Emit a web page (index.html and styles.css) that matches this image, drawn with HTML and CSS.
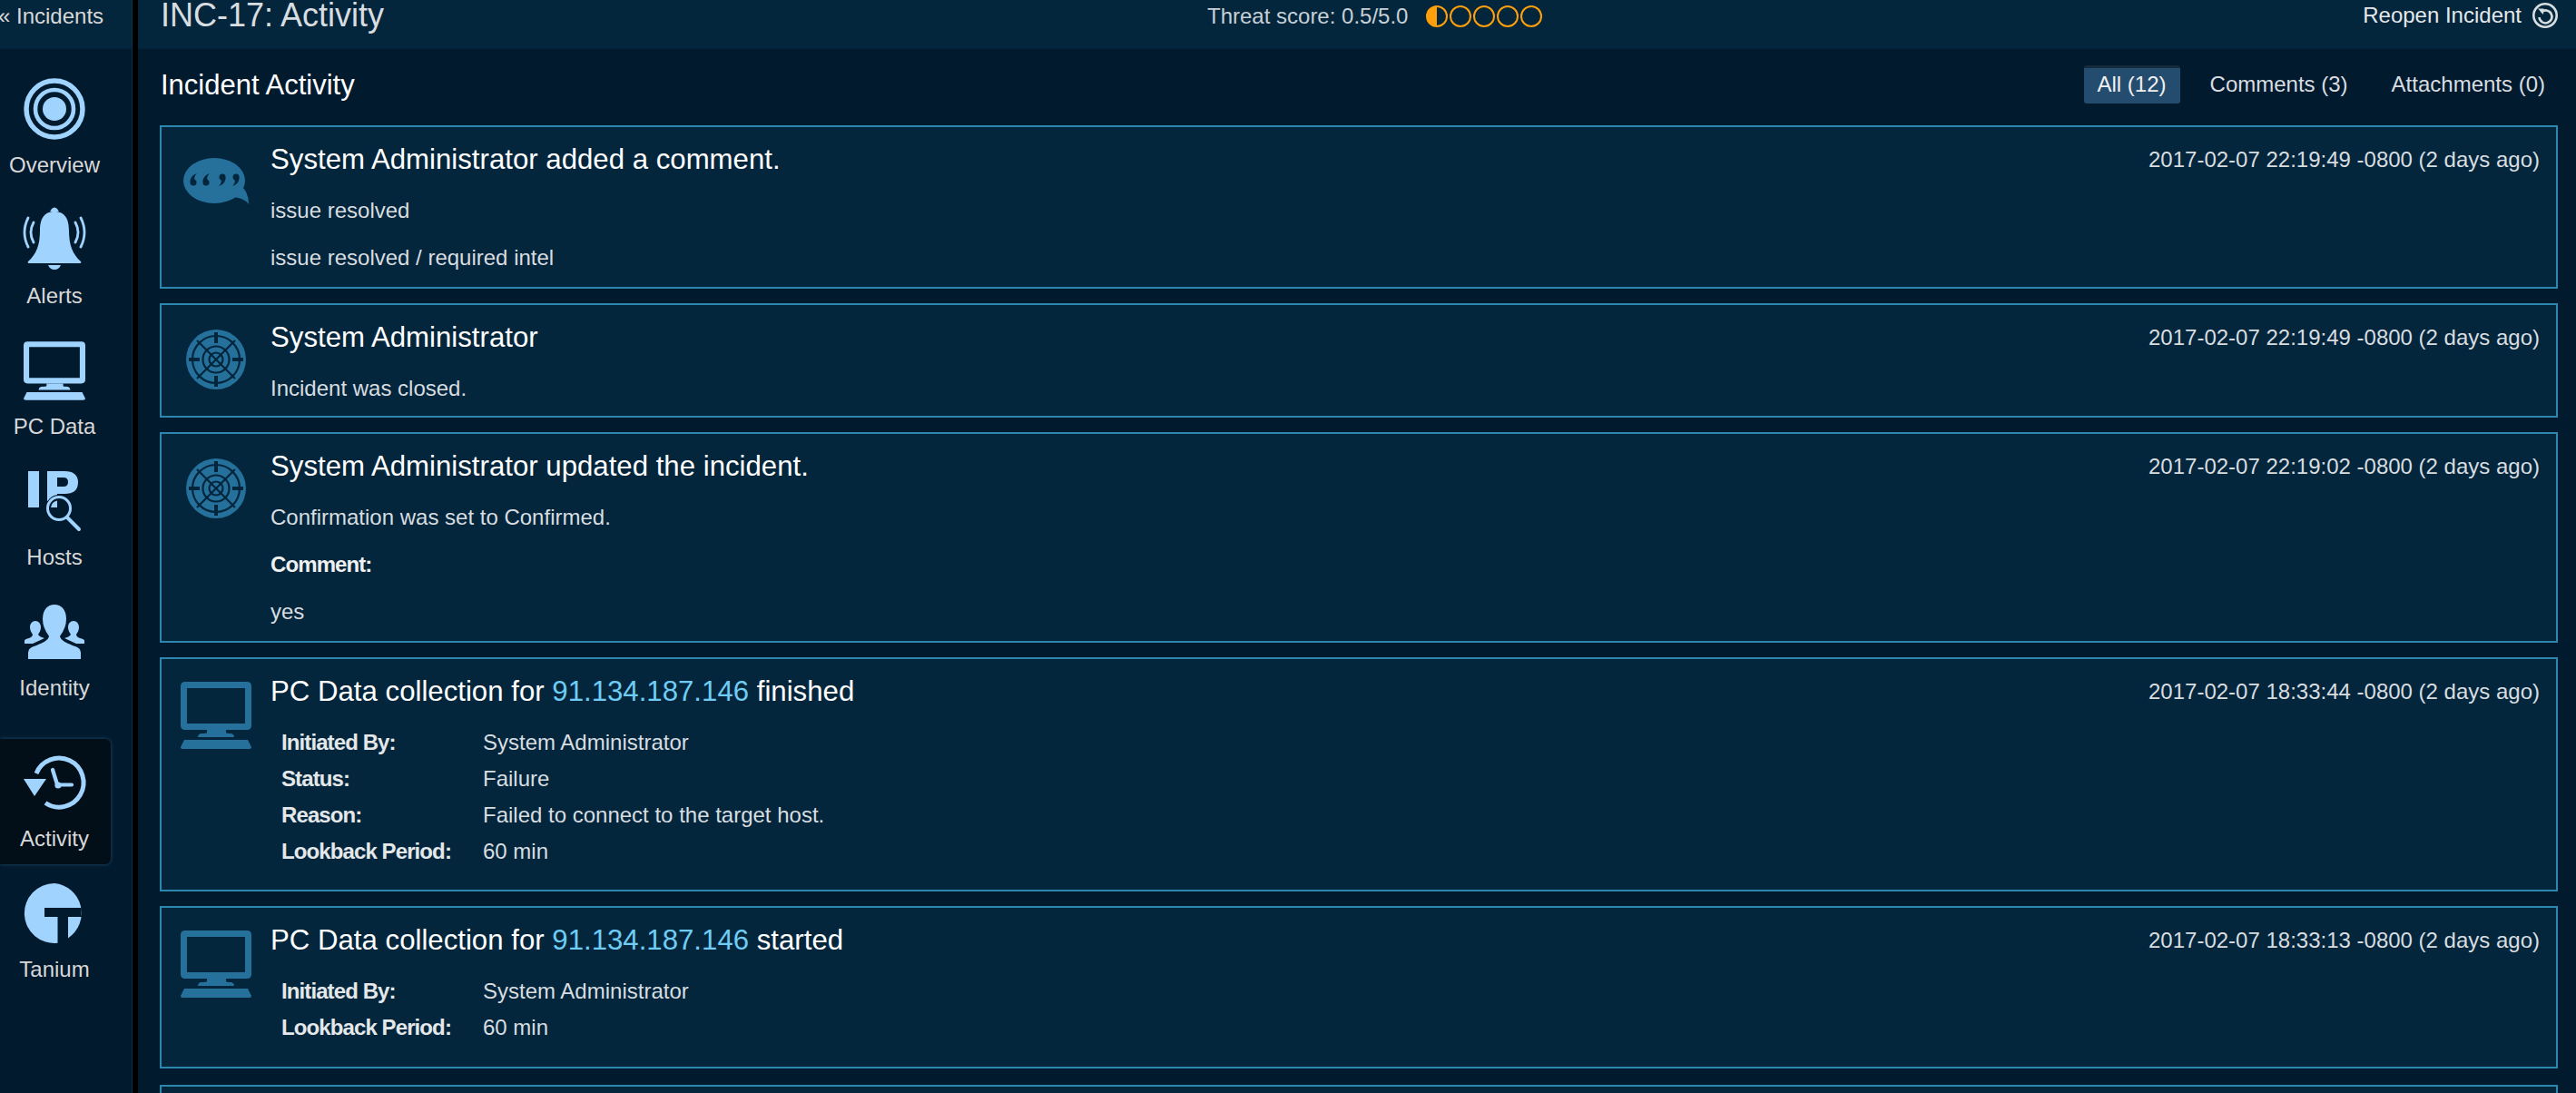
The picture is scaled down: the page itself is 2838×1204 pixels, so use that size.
FILE: index.html
```html
<!DOCTYPE html>
<html lang="en">
<head>
<meta charset="utf-8">
<title>INC-17: Activity</title>
<link rel="stylesheet" href="styles.css">
</head>
<body>
<svg class="defs" width="0" height="0" aria-hidden="true">
  <defs>
    <symbol id="pc" viewBox="0 0 78 74">
      <path fill-rule="evenodd" d="M5 0H73Q78 0 78 5V48Q78 53 73 53H5Q0 53 0 48V5Q0 0 5 0ZM7 7V46H71V7Z"/>
      <path d="M29 53H50V56Q50 57 56 57Q59 58 59 61H19Q19 58 22 57Q29 57 29 56Z"/>
      <path d="M4 64H74L78 72Q78 74 75 74H3Q0 74 0 72Z"/>
    </symbol>
    <symbol id="target" viewBox="0 0 66 66">
      <circle cx="33" cy="33" r="33"/>
      <g fill="none" stroke="#03263c" stroke-width="2.2">
        <circle cx="33" cy="33" r="26"/>
        <circle cx="33" cy="33" r="14.5"/>
        <circle cx="33" cy="33" r="7.5"/>
        <path d="M12 12L54 54M54 12L12 54"/>
      </g>
      <path fill="#03263c" d="M31 3H35V15H31ZM31 51H35V63H31ZM3 31H15V35H3ZM51 31H63V35H51Z"/>
    </symbol>
  </defs>
</svg>
<div class="app">
  <aside class="sidebar">
    <div class="side-top"><a class="back">« Incidents</a></div>
    <nav class="nav">
      <a class="nav-item">
        <svg class="nav-icon" viewBox="0 0 72 72"><g class="line"><circle cx="36" cy="36" r="31" stroke-width="5.5"/><circle cx="36" cy="36" r="21" stroke-width="4.6"/></g><circle cx="36" cy="36" r="13"/></svg>
        <span class="nav-label">Overview</span>
      </a>
      <a class="nav-item">
        <svg class="nav-icon" viewBox="0 0 72 72"><path d="M33 2Q36 -1 39 2L41 5H31Z"/><path d="M36 5C48 5 52 14 52 26C52 42 56 52 65 60Q66 62 64 62H8Q6 62 7 60C16 52 20 42 20 26C20 14 24 5 36 5Z"/><path d="M29 64H43Q41 69 36 69Q31 69 29 64Z"/><g class="line" stroke-width="2.8" stroke-linecap="round"><path d="M13 17Q7 28 13 39"/><path d="M7 12Q-1 28 7 44"/><path d="M59 17Q65 28 59 39"/><path d="M65 12Q73 28 65 44"/></g></svg>
        <span class="nav-label">Alerts</span>
      </a>
      <a class="nav-item">
        <svg class="nav-icon" viewBox="0 0 72 72"><use href="#pc" x="2" y="4" width="68" height="65"/></svg>
        <span class="nav-label">PC Data</span>
      </a>
      <a class="nav-item">
        <svg class="nav-icon" viewBox="0 0 72 72"><path d="M7 3H19V43H7Z"/><path fill-rule="evenodd" d="M28 3H47Q62 3 62 15.500Q62 28 47 28H39V36H28ZM39 10V20H46Q51 20 51 15Q51 10 46 10Z"/><circle class="glass" cx="41" cy="44" r="15"/><g class="line" stroke-width="3"><circle cx="41" cy="44" r="12.500"/><path d="M50 54L63 67" stroke-width="4" stroke-linecap="round"/></g><path d="M39 35.500A9 9 0 0 0 32 43H39Z"/></svg>
        <span class="nav-label">Hosts</span>
      </a>
      <a class="nav-item">
        <svg class="nav-icon" viewBox="0 0 72 72"><path d="M15 24C18.500 24 21 27 21 31C21 35 19 37 18 39C19 41 22 42 25 43L12 49H3V46C3 44 5 44 8 43C10 42 12 41 12 39C11 37 9 35 9 31C9 27 11.500 24 15 24Z"/><path d="M57 24C53.500 24 51 27 51 31C51 35 53 37 54 39C53 41 50 42 47 43L60 49H69V46C69 44 67 44 64 43C62 42 60 41 60 39C61 37 63 35 63 31C63 27 60.500 24 57 24Z"/><path class="person" d="M36 5C44 5 50 11 50 22C50 31 46 37 43 41C44 45 49 47 56 50C63 52 66 54 66 59V67H6V59C6 54 9 52 16 50C23 47 28 45 29 41C26 37 22 31 22 22C22 11 28 5 36 5Z"/></svg>
        <span class="nav-label">Identity</span>
      </a>
      <a class="nav-item nav-item-active">
        <svg class="nav-icon" viewBox="0 0 72 72"><g class="line" stroke-width="5"><path d="M16 26A27 27 0 1 1 26 58.500"/></g><path d="M2 32H27L14 51Z"/><g class="line" stroke-width="4.200" stroke-linecap="round"><path d="M34 22L39 38"/><path d="M41 38.500H55"/></g><circle cx="40" cy="39" r="3.600"/></svg>
        <span class="nav-label">Activity</span>
      </a>
      <a class="nav-item">
        <svg class="nav-icon" viewBox="0 0 72 72"><path d="M36 3A33 33 0 0 1 51 63.400V40H65.500V30H25V40H39.500V68.800A33 33 0 1 1 36 3Z"/></svg>
        <span class="nav-label">Tanium</span>
      </a>
    </nav>
  </aside>
  <main class="main">
    <header class="topbar">
      <h1 class="page-title">INC-17: Activity</h1>
      <div class="threat">
        <span>Threat score: 0.5/5.0</span>
        <span class="dots"><i class="dot dot-half"></i><i class="dot"></i><i class="dot"></i><i class="dot"></i><i class="dot"></i></span>
      </div>
      <a class="reopen">Reopen Incident
        <svg class="reopen-icon" viewBox="0 0 28 32"><circle cx="14" cy="16" r="12.700" fill="none" stroke-width="2.600"/><path d="M9.500 12.500A7 7 0 1 1 7.500 18" fill="none" stroke-width="2.600"/><path d="M6 8.500H12.500L12 15Z" stroke="none" fill="#d8dde0"/></svg>
      </a>
    </header>
    <div class="subhead">
      <h2 class="section-title">Incident Activity</h2>
      <div class="tabs">
        <a class="tab tab-active">All (12)</a>
        <a class="tab">Comments (3)</a>
        <a class="tab">Attachments (0)</a>
      </div>
    </div>
    <section class="feed">
      <article class="card">
        <div class="card-icon">
          <svg class="icon-chat" viewBox="0 0 73 52"><ellipse cx="34" cy="25" rx="34" ry="25"/><path d="M62 30Q72 36 72 51Q66 43 52 43Z"/><g fill="#03263c"><circle cx="11" cy="27" r="3.500"/><path d="M7.500 26.500C7.500 22 10 18.500 15 17C12 20 11.500 23 13 25Z"/><circle cx="25" cy="27" r="3.500"/><path d="M21.500 26.500C21.500 22 24 18.500 29 17C26 20 25.500 23 27 25Z"/><circle cx="43" cy="21" r="3.500"/><path d="M46.500 21.500C46.500 26 44 29.500 39 31C42 28 42.500 25 41 23Z"/><circle cx="58" cy="21" r="3.500"/><path d="M61.500 21.500C61.500 26 59 29.500 54 31C57 28 57.500 25 56 23Z"/></g></svg>
        </div>
        <div class="card-body">
          <div class="card-head"><h3 class="card-title">System Administrator added a comment.</h3><time class="card-time">2017-02-07 22:19:49 -0800 (2 days ago)</time></div>
          <p class="para">issue resolved</p>
          <p class="para">issue resolved / required intel</p>
        </div>
      </article>
      <article class="card card-short">
        <div class="card-icon"><svg class="icon-target"><use href="#target"/></svg></div>
        <div class="card-body">
          <div class="card-head"><h3 class="card-title">System Administrator</h3><time class="card-time">2017-02-07 22:19:49 -0800 (2 days ago)</time></div>
          <p class="para">Incident was closed.</p>
        </div>
      </article>
      <article class="card">
        <div class="card-icon"><svg class="icon-target"><use href="#target"/></svg></div>
        <div class="card-body">
          <div class="card-head"><h3 class="card-title">System Administrator updated the incident.</h3><time class="card-time">2017-02-07 22:19:02 -0800 (2 days ago)</time></div>
          <p class="para">Confirmation was set to Confirmed.</p>
          <p class="para para-strong">Comment:</p>
          <p class="para">yes</p>
        </div>
      </article>
      <article class="card card-data">
        <div class="card-icon"><svg class="icon-pc"><use href="#pc"/></svg></div>
        <div class="card-body">
          <div class="card-head"><h3 class="card-title">PC Data collection for <a class="link">91.134.187.146</a> finished</h3><time class="card-time">2017-02-07 18:33:44 -0800 (2 days ago)</time></div>
          <dl class="facts">
            <dt>Initiated By:</dt><dd>System Administrator</dd>
            <dt>Status:</dt><dd>Failure</dd>
            <dt>Reason:</dt><dd>Failed to connect to the target host.</dd>
            <dt>Lookback Period:</dt><dd>60 min</dd>
          </dl>
        </div>
      </article>
      <article class="card card-data card-data-tail">
        <div class="card-icon"><svg class="icon-pc"><use href="#pc"/></svg></div>
        <div class="card-body">
          <div class="card-head"><h3 class="card-title">PC Data collection for <a class="link">91.134.187.146</a> started</h3><time class="card-time">2017-02-07 18:33:13 -0800 (2 days ago)</time></div>
          <dl class="facts">
            <dt>Initiated By:</dt><dd>System Administrator</dd>
            <dt>Lookback Period:</dt><dd>60 min</dd>
          </dl>
        </div>
      </article>
      <article class="card card-cut"></article>
    </section>
  </main>
</div>
</body>
</html>
```

FILE: styles.css
```css
* { box-sizing: border-box; }
html, body { margin: 0; height: 1204px; overflow: hidden; background: #000; }
body { font-family: "Liberation Sans", Arial, sans-serif; color: #d8dde0; }
.defs { position: absolute; }
.app { display: flex; height: 1204px; gap: 6px; }

.sidebar { width: 146px; flex: none; background: #021a2e; border-right: 1px solid #07304a; }
.side-top { height: 54px; background: #03263c; line-height: 36px; font-size: 24px; color: #d8d8d8; margin-left: -2px; white-space: nowrap; }
.nav { padding-top: 30px; }
.nav-item { display: flex; flex-direction: column; align-items: center; width: 122px; height: 144px; padding-right: 2px; }
.nav-icon { width: 72px; height: 72px; fill: #a0d4ff; stroke: #a0d4ff; stroke-width: 0; overflow: visible; flex: none; }
.line { fill: none; }
.glass { fill: #021a2e; }
.person { stroke: #021a2e; stroke-width: 2px; }
.nav-label { margin-top: 12px; font-size: 24px; line-height: 28px; color: #d8d8d8; }
.nav-item-active { height: 138px; margin: 10px 0 18px; padding-top: 12px; background: #020e18; border-radius: 0 6px 6px 0; box-shadow: 0 0 4px #1d4d6c; }

.main { flex: 1; min-width: 0; background: #021a2e; }
.topbar { display: grid; grid-template-columns: 1153px auto 1fr; align-items: start; height: 54px; padding-left: 25px; background: #03263c; }
.page-title { margin: 0; font-size: 36px; font-weight: 400; line-height: 34px; color: #d8dde0; }
.threat { display: flex; align-items: center; gap: 20px; height: 36px; font-size: 24px; color: #c8d0d6; }
.dots { display: flex; gap: 2px; }
.dot { width: 24px; height: 24px; border: 2.5px solid #ff9f0a; border-radius: 50%; }
.dot-half { background: linear-gradient(90deg, #ff9f0a 50%, transparent 50%); }
.reopen { display: flex; align-items: center; justify-content: flex-end; gap: 12px; height: 34px; padding-right: 20px; font-size: 24px; color: #e4e8ea; }
.reopen-icon { width: 28px; height: 32px; stroke: #d8dde0; flex: none; }

.subhead { display: flex; justify-content: space-between; align-items: flex-start; height: 84px; padding: 18px 19px 0 25px; }
.section-title { margin: 2px 0 0; font-size: 31px; font-weight: 400; line-height: 40px; color: #fff; }
.tabs { display: flex; gap: 18px; }
.tab { height: 42px; padding: 0 15px; font-size: 24px; line-height: 42px; color: #d8dde0; border-radius: 3px; }
.tab-active { background: #244c6e; border-top: 3px solid #152a3a; line-height: 36px; color: #f0f0f0; }

.feed { display: flex; flex-direction: column; gap: 16px; margin: 0 20px 0 24px; }
.card { display: flex; flex: none; padding: 16px 18px 15px 0; background: #03263c; border: 2px solid #2b87ad; }
.card-short { padding-bottom: 13px; }
.card-data { padding-bottom: 22px; }
.card-data-tail { padding-bottom: 23px; margin-bottom: 2px; }
.card-cut { height: 60px; }
.card-icon { width: 120px; flex: none; display: flex; justify-content: center; padding-top: 9px; fill: #25719b; }
.icon-chat { width: 73px; height: 52px; margin-top: 9px; }
.icon-target { width: 66px; height: 66px; margin-top: 2px; }
.icon-pc { width: 78px; height: 74px; }
.card-body { flex: 1; min-width: 0; }
.card-head { display: flex; justify-content: space-between; align-items: center; height: 40px; margin-bottom: 19px; }
.card-title { margin: 0; font-size: 31.2px; font-weight: 400; line-height: 40px; color: #fff; }
.card-time { font-size: 24px; color: #d8dde0; }
.para { margin: 0 0 18px; font-size: 24px; line-height: 34px; color: #d8dde0; }
.para:last-child { margin-bottom: 0; }
.para-strong { font-weight: 700; color: #f0f0f0; letter-spacing: -0.9px; }
.link { color: #6fcdf5; }
.card-data .card-head { margin-bottom: 16px; }
.facts { display: grid; grid-template-columns: 222px 1fr; grid-auto-rows: 40px; align-items: center; margin: 0; padding-left: 12px; font-size: 24px; }
.facts dt { font-weight: 700; color: #e4e8ea; letter-spacing: -0.9px; }
.facts dd { margin: 0; color: #d8dde0; }
```
